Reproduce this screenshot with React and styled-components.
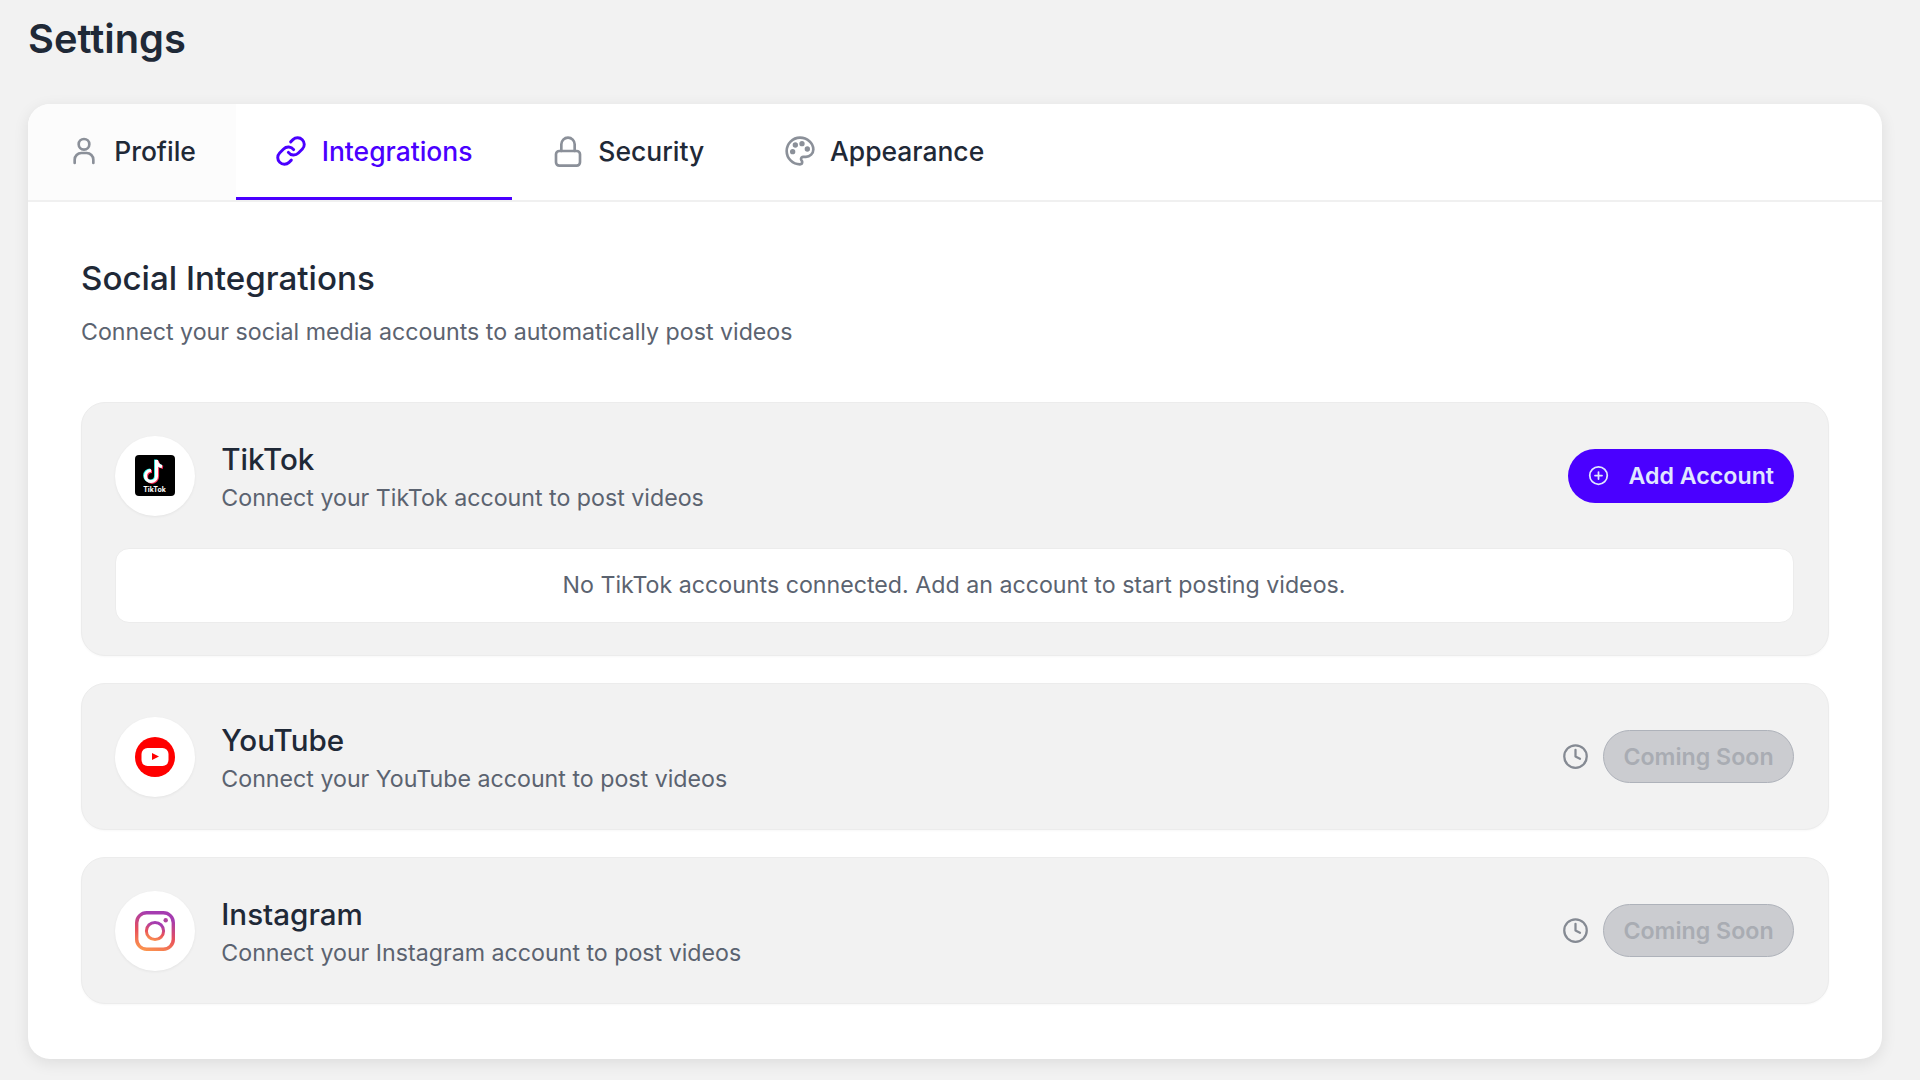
import React from "react";
import styled, { createGlobalStyle } from "styled-components";
import { Clock, CirclePlus } from "lucide-react";

const Global = createGlobalStyle`
  * { box-sizing: border-box; }
  html, body { margin: 0; background: #f2f2f2; }
  body { font-family: Inter, "Liberation Sans", sans-serif; color: #1f2937; }
`;

const Page = styled.div`
  width: 1920px;
  height: 1080px;
  overflow: hidden;
  padding: 17px 38px 0 28px;
`;
const Title = styled.h1`
  margin: 0 0 43px;
  font-size: 39.8px;
  line-height: 44px;
  font-weight: 600;
  color: #1f2937;
`;
const Panel = styled.div`
  background: #fff;
  border-radius: 22px;
  box-shadow: 0 4px 16px rgba(0, 0, 0, 0.09);
  height: 955px;
  overflow: hidden;
`;
const TabBar = styled.div`
  display: flex;
  height: 98px;
  border-bottom: 2px solid #f0f0f0;
`;
const Tab = styled.div`
  display: flex;
  align-items: center;
  gap: 14.5px;
  padding: 0 39.7px;
  height: 96px;
  font-size: 26.46px;
  font-weight: 500;
  color: ${p => (p.$active ? "#4a00ff" : "#1f2937")};
  border-bottom: 3px solid ${p => (p.$active ? "#4a00ff" : "transparent")};
  background: ${p => (p.$muted ? "#fcfcfc" : "#fff")};
  svg { width: 32px; height: 32px; color: ${p => (p.$active ? "#4a00ff" : "#8b9099")}; }
`;
const Content = styled.div`
  padding: 54px 53px 0;
`;
const Heading = styled.h2`
  margin: 0;
  font-size: 33.15px;
  line-height: 44px;
  font-weight: 500;
  color: #1f2937;
`;
const Lead = styled.p`
  margin: 14.3px 0 51.4px;
  font-size: 23.2px;
  line-height: 36px;
  color: #5b6370;
`;
const List = styled.div`
  display: flex;
  flex-direction: column;
  gap: 27px;
`;
const Item = styled.section`
  background: #f2f2f2;
  border: 1px solid #ececec;
  border-radius: 24px;
  padding: 33px 34px 32px 32.5px;
  box-shadow: 0 1px 2px rgba(0, 0, 0, 0.03);
`;
const Row = styled.div`
  display: flex;
  align-items: center;
  gap: 26.8px;
  height: 80px;
`;
const Avatar = styled.div`
  width: 80px;
  height: 80px;
  flex: none;
  border-radius: 50%;
  background: #fff;
  display: flex;
  align-items: center;
  justify-content: center;
  box-shadow: 0 1px 3px rgba(0, 0, 0, 0.06);
`;
const Info = styled.div`
  flex: 1;
  padding-top: 3.5px;
`;
const Name = styled.div`
  font-size: 29.6px;
  line-height: 40px;
  font-weight: 500;
  color: #1f2937;
`;
const Desc = styled.div`
  margin-top: 1.6px;
  font-size: 23.2px;
  line-height: 36px;
  color: #5b6370;
`;
const AddButton = styled.button`
  display: flex;
  align-items: center;
  gap: 19.5px;
  height: 54px;
  width: 226px;
  padding: 0 20px;
  border: 0;
  border-radius: 27px;
  background: #4a00ff;
  color: #e0e7ff;
  white-space: nowrap;
  font: 600 23.2px Inter, sans-serif;
  svg { width: 21px; height: 21px; flex: none; }
`;
const Soon = styled.div`
  display: flex;
  align-items: center;
  gap: 14px;
  > svg { width: 27px; height: 27px; color: #858a93; }
`;
const SoonButton = styled.button`
  width: 191px;
  height: 53px;
  padding: 0;
  border: 1px solid #aeb2ba;
  border-radius: 27px;
  background: #cbccd0;
  color: #a9acb3;
  white-space: nowrap;
  font: 600 23.2px Inter, sans-serif;
`;
const Empty = styled.div`
  margin-top: 32px;
  height: 75px;
  margin-right: 0.5px;
  background: #fff;
  border: 1px solid #ececec;
  border-radius: 14px;
  display: flex;
  align-items: center;
  justify-content: center;
  font-size: 23.2px;
  color: #5b6370;
`;

const UserIcon = () => (
  <svg viewBox="0 0 24 24" fill="none" stroke="currentColor" strokeWidth="2" strokeLinecap="round">
    <circle cx="12" cy="7" r="4" />
    <path d="M5 21v-2.5a5 5 0 0 1 5-5h4a5 5 0 0 1 5 5V21" />
  </svg>
);
const LinkIcon = () => (
  <svg viewBox="0 0 24 24" fill="none" stroke="currentColor" strokeWidth="2.2" strokeLinecap="round" strokeLinejoin="round">
    <path d="M10 13a5 5 0 0 0 7.54.54l3-3a5 5 0 0 0-7.07-7.07l-1.72 1.71" />
    <path d="M14 11a5 5 0 0 0-7.54-.54l-3 3a5 5 0 0 0 7.07 7.07l1.71-1.71" />
  </svg>
);
const LockIcon = () => (
  <svg viewBox="0 0 24 24" fill="none" stroke="currentColor" strokeWidth="2" strokeLinecap="round" strokeLinejoin="round">
    <rect x="3" y="12" width="18" height="11" rx="2.5" />
    <path d="M7 12V7a5 5 0 0 1 10 0v5" />
  </svg>
);
const PaletteIcon = () => (
  <svg viewBox="0 0 24 24" fill="none" stroke="currentColor" strokeWidth="2" strokeLinecap="round" strokeLinejoin="round">
    <path d="M12 2C6.5 2 2 6.5 2 12s4.5 10 10 10c.93 0 1.65-.75 1.65-1.69 0-.44-.18-.83-.44-1.12-.29-.29-.44-.65-.44-1.13a1.64 1.64 0 0 1 1.67-1.67h2C19.5 16.39 22 13.89 22 10.8 22 6 17.5 2 12 2z" />
    <circle cx="13.5" cy="6.5" r="1" fill="currentColor" />
    <circle cx="17.5" cy="10.5" r="1" fill="currentColor" />
    <circle cx="8.5" cy="7.5" r="1" fill="currentColor" />
    <circle cx="6.5" cy="12.5" r="1" fill="currentColor" />
  </svg>
);

const NOTE = "M21.5 5v16a5.5 5.5 0 1 1-5.5-5.5M21.5 6c.5 3 2.5 5 5.5 5.5";
const TikTokLogo = () => (
  <svg width="40" height="41" viewBox="0 0 40 41">
    <rect width="40" height="41" rx="4" fill="#000" />
    <g fill="none" strokeWidth="3.2">
      <path d={NOTE} stroke="#fe2c55" transform="translate(1 .8)" />
      <path d={NOTE} stroke="#25f4ee" transform="translate(-.8 -.4)" />
      <path d={NOTE} stroke="#fff" />
    </g>
  </svg>
);
const TikTokCaption = styled.span`
  position: absolute;
  left: 0;
  right: 0;
  bottom: 2px;
  text-align: center;
  font-size: 7px;
  line-height: 8px;
  font-weight: 700;
  color: #fff;
`;
const LogoBox = styled.div`
  position: relative;
  width: 40px;
  height: 41px;
  svg { display: block; }
`;
const YouTubeLogo = () => (
  <svg width="40" height="40" viewBox="0 0 40 40">
    <circle cx="20" cy="20" r="20" fill="#f00" />
    <rect x="6.5" y="11" width="27" height="18" rx="6" fill="#fff" />
    <path d="M17 16v7l7-3.5z" fill="#f00" />
  </svg>
);
const InstagramLogo = () => (
  <svg width="40" height="40" viewBox="0 0 40 40">
    <defs>
      <linearGradient id="ig" x1="0" y1="1" x2="0.3" y2="0">
        <stop offset="0" stopColor="#fd9a4d" />
        <stop offset="0.5" stopColor="#e8505b" />
        <stop offset="1" stopColor="#a53cb0" />
      </linearGradient>
    </defs>
    <rect x="1.7" y="1.7" width="36.6" height="36.6" rx="10" fill="none" stroke="url(#ig)" strokeWidth="3.4" />
    <circle cx="20" cy="20" r="8.6" fill="none" stroke="url(#ig)" strokeWidth="3" />
    <circle cx="30.7" cy="9.3" r="2.2" fill="#b0449f" />
  </svg>
);

const items = [
  { name: "YouTube", logo: <YouTubeLogo /> },
  { name: "Instagram", logo: <InstagramLogo /> },
];

export default function App() {
  return (
    <Page>
      <Global />
      <Title>Settings</Title>
      <Panel>
        <TabBar>
          <Tab $muted><UserIcon />Profile</Tab>
          <Tab $active><LinkIcon />Integrations</Tab>
          <Tab><LockIcon />Security</Tab>
          <Tab><PaletteIcon />Appearance</Tab>
        </TabBar>
        <Content>
          <Heading>Social Integrations</Heading>
          <Lead>Connect your social media accounts to automatically post videos</Lead>
          <List>
            <Item>
              <Row>
                <Avatar>
                  <LogoBox><TikTokLogo /><TikTokCaption>TikTok</TikTokCaption></LogoBox>
                </Avatar>
                <Info>
                  <Name>TikTok</Name>
                  <Desc>Connect your TikTok account to post videos</Desc>
                </Info>
                <AddButton><CirclePlus />Add Account</AddButton>
              </Row>
              <Empty>No TikTok accounts connected. Add an account to start posting videos.</Empty>
            </Item>
            {items.map(it => (
              <Item key={it.name}>
                <Row>
                  <Avatar>{it.logo}</Avatar>
                  <Info>
                    <Name>{it.name}</Name>
                    <Desc>Connect your {it.name} account to post videos</Desc>
                  </Info>
                  <Soon>
                    <Clock />
                    <SoonButton>Coming Soon</SoonButton>
                  </Soon>
                </Row>
              </Item>
            ))}
          </List>
        </Content>
      </Panel>
    </Page>
  );
}
